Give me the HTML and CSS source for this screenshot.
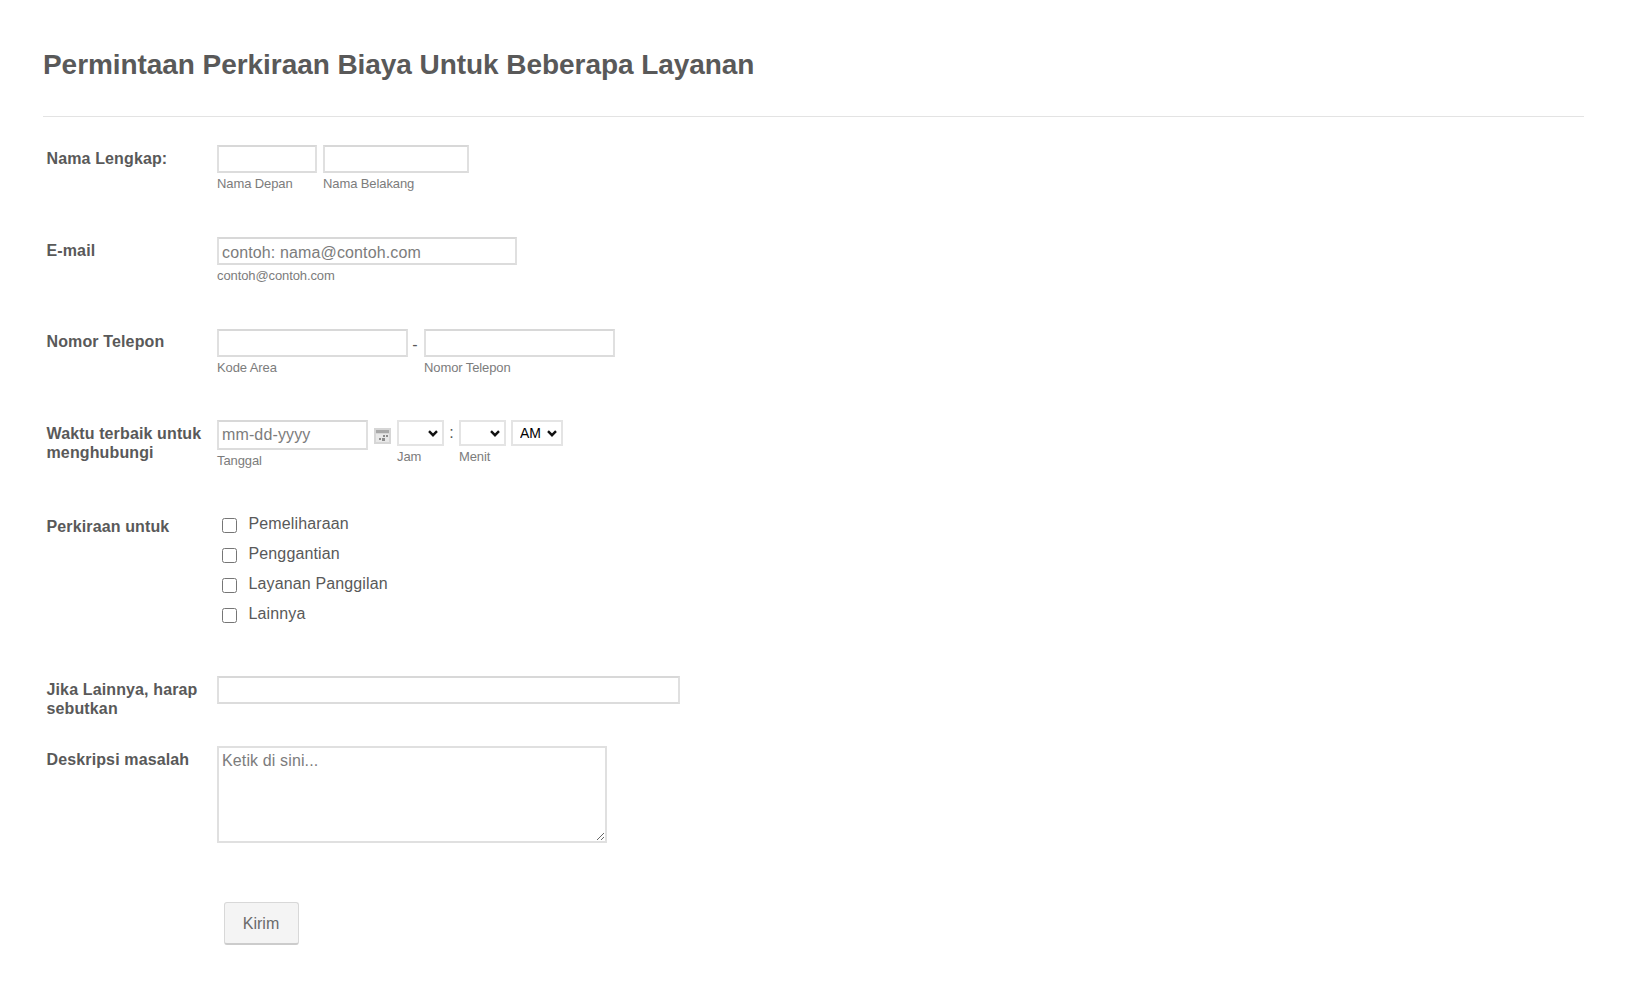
FILE: index.html
```html
<!DOCTYPE html>
<html lang="id">
<head>
<meta charset="utf-8">
<title>Permintaan Perkiraan Biaya</title>
<link rel="stylesheet" href="styles.css">
</head>
<body>
<form class="form">
  <h1 class="title">Permintaan Perkiraan Biaya Untuk Beberapa Layanan</h1>
  <div class="row row-name">
    <label class="label">Nama Lengkap:</label>
    <div class="fields">
      <div class="field"><input class="input w100" type="text"><span class="sub">Nama Depan</span></div>
      <div class="field"><input class="input w145" type="text"><span class="sub">Nama Belakang</span></div>
    </div>
  </div>
  <div class="row row-name">
    <label class="label">E-mail</label>
    <div class="fields">
      <div class="field"><input class="input w300" type="text" placeholder="contoh: nama@contoh.com"><span class="sub">contoh@contoh.com</span></div>
    </div>
  </div>
  <div class="row row-name">
    <label class="label label-tel">Nomor Telepon</label>
    <div class="fields">
      <div class="field"><input class="input w191" type="text"><span class="sub">Kode Area</span></div>
      <span class="dash">-</span>
      <div class="field"><input class="input w191" type="text"><span class="sub">Nomor Telepon</span></div>
    </div>
  </div>
  <div class="row row-time">
    <label class="label">Waktu terbaik untuk menghubungi</label>
    <div class="fields">
      <div class="field"><input class="input w150" type="text" placeholder="mm-dd-yyyy"><span class="sub sub-date">Tanggal</span></div>
      <svg class="cal" viewBox="0 0 17 16" aria-hidden="true">
        <rect x="0" y="0" width="17" height="16" fill="#d6d6d6"/>
        <rect x="2" y="2" width="13" height="3" fill="#a8a8a8"/>
        <rect x="2" y="6" width="13" height="8" fill="#e8e8e8"/>
        <path d="M9 7h2v2H9zM12 7h2v2h-2zM5 10h2v2H5zM8 10h3v3H8z" fill="#8c8c8c"/>
      </svg>
      <div class="field field-time">
        <div class="select-box">
          <select class="select w47"><option></option></select>
          <svg class="chev" viewBox="0 0 10 7" aria-hidden="true"><path d="M1 1.2 5 5.2 9 1.2" fill="none" stroke="#111" stroke-width="2.4"/></svg>
        </div>
        <span class="sub sub-time">Jam</span>
      </div>
      <span class="colon">:</span>
      <div class="field field-time">
        <div class="select-box">
          <select class="select w47"><option></option></select>
          <svg class="chev" viewBox="0 0 10 7" aria-hidden="true"><path d="M1 1.2 5 5.2 9 1.2" fill="none" stroke="#111" stroke-width="2.4"/></svg>
        </div>
        <span class="sub sub-time">Menit</span>
      </div>
      <div class="field field-time">
        <div class="select-box">
          <select class="select w52"><option>AM</option></select>
          <svg class="chev" viewBox="0 0 10 7" aria-hidden="true"><path d="M1 1.2 5 5.2 9 1.2" fill="none" stroke="#111" stroke-width="2.4"/></svg>
        </div>
      </div>
    </div>
  </div>
  <div class="row row-check">
    <label class="label label-check">Perkiraan untuk</label>
    <div class="checks">
      <label class="check"><input type="checkbox">Pemeliharaan</label>
      <label class="check"><input type="checkbox">Penggantian</label>
      <label class="check"><input type="checkbox">Layanan Panggilan</label>
      <label class="check"><input type="checkbox">Lainnya</label>
    </div>
  </div>
  <div class="row row-other">
    <label class="label">Jika Lainnya, harap sebutkan</label>
    <div class="fields"><input class="input w463" type="text"></div>
  </div>
  <div class="row row-text">
    <label class="label">Deskripsi masalah</label>
    <div class="fields"><textarea class="area" placeholder="Ketik di sini..."></textarea></div>
  </div>
  <div class="actions"><button class="submit" type="button">Kirim</button></div>
</form>
</body>
</html>
```

FILE: styles.css
```css
* { box-sizing: border-box; }
html, body { margin: 0; padding: 0; background: #fff; }
body { font-family: "Liberation Sans", Arial, sans-serif; color: #595959; font-size: 16px; }
.form { padding: 0 44px 0 43px; }
.title { margin: 0; height: 117px; padding-top: 48px; font-size: 28px; line-height: 34px; font-weight: bold; letter-spacing: -0.06px; color: #595959; border-bottom: 1px solid #e3e3e3; }
.row { display: flex; align-items: flex-start; padding-left: 3.5px; }
.row-name { margin-top: 28px; height: 64px; }
.row-time { margin-top: 27px; height: 71px; }
.row-check { margin-top: 23px; height: 135px; }
.row-other { margin-top: 27px; height: 42px; }
.row-text { margin-top: 28px; height: 97px; }
.label { width: 170.5px; flex: none; padding-top: 4px; padding-right: 8px; font-size: 16px; line-height: 19px; font-weight: bold; letter-spacing: 0.13px; color: #595959; }
.label-tel { padding-top: 3px; }
.label-check { padding-top: 3px; }
.fields { display: flex; align-items: flex-start; }
.field { display: flex; flex-direction: column; margin-right: 6px; }
.field-time { margin-right: 5px; }
.sub { margin-top: 3px; font-size: 13px; line-height: 15px; letter-spacing: -0.1px; color: #7c7c7c; white-space: nowrap; }
.sub-time { margin-top: 3px; }
.input { display: block; height: 28px; padding: 0 3px; border: 2px solid #e0e0e0; border-top-color: #d8d8d8; border-bottom-color: #dcdcdc; background: #fff; font: 16px "Liberation Sans", Arial, sans-serif; letter-spacing: 0.13px; color: #555; outline: 0; }
.input::placeholder, .area::placeholder { color: #7c7c7c; opacity: 1; }
.w100 { width: 100px; }
.w145 { width: 146px; }
.w300 { width: 300px; padding-top: 4px; }
.w191 { width: 191px; }
.w150 { width: 151px; height: 30px; }
.w463 { width: 463px; }
.w47 { width: 47px; }
.w52 { width: 52px; }
.dash { width: 10px; margin: 7px 4px 0 -4px; text-align: center; font-size: 16px; line-height: 18px; }
.cal { width: 17px; height: 16px; margin: 8px 6px 0 0; flex: none; }
.colon { width: 9px; margin: 4px 3px 0 -2px; text-align: center; line-height: 18px; }
.select-box { position: relative; }
.select { display: block; height: 26px; padding: 0 0 0 7px; border: 2px solid #e4e4e4; border-radius: 0; background: #fff; font: 14px "Liberation Sans", Arial, sans-serif; color: #000; outline: 0; appearance: none; }
.chev { position: absolute; right: 6px; top: 10px; width: 10px; height: 7px; pointer-events: none; }
.checks { display: flex; flex-direction: column; padding-left: 4.5px; }
.check { display: flex; height: 30px; align-items: flex-start; font-size: 16px; line-height: 19px; letter-spacing: 0.13px; color: #595959; }
.check input { width: 15px; height: 15px; margin: 4px 12px 0 0; }
.area { display: block; width: 390px; height: 97px; padding: 4px 3px; border: 2px solid #e0e0e0; background: #fff; font: 16px "Liberation Sans", Arial, sans-serif; letter-spacing: 0.13px; color: #555; outline: 0; }
.actions { margin-top: 59px; padding-left: 180.5px; }
.submit { display: block; width: 75px; height: 43px; padding-top: 2px; border: 1px solid #d8d8d8; border-bottom: 2px solid #cccccc; border-radius: 3px; background: #f4f4f4; font: 16px "Liberation Sans", Arial, sans-serif; color: #6a6a6a; }
```
